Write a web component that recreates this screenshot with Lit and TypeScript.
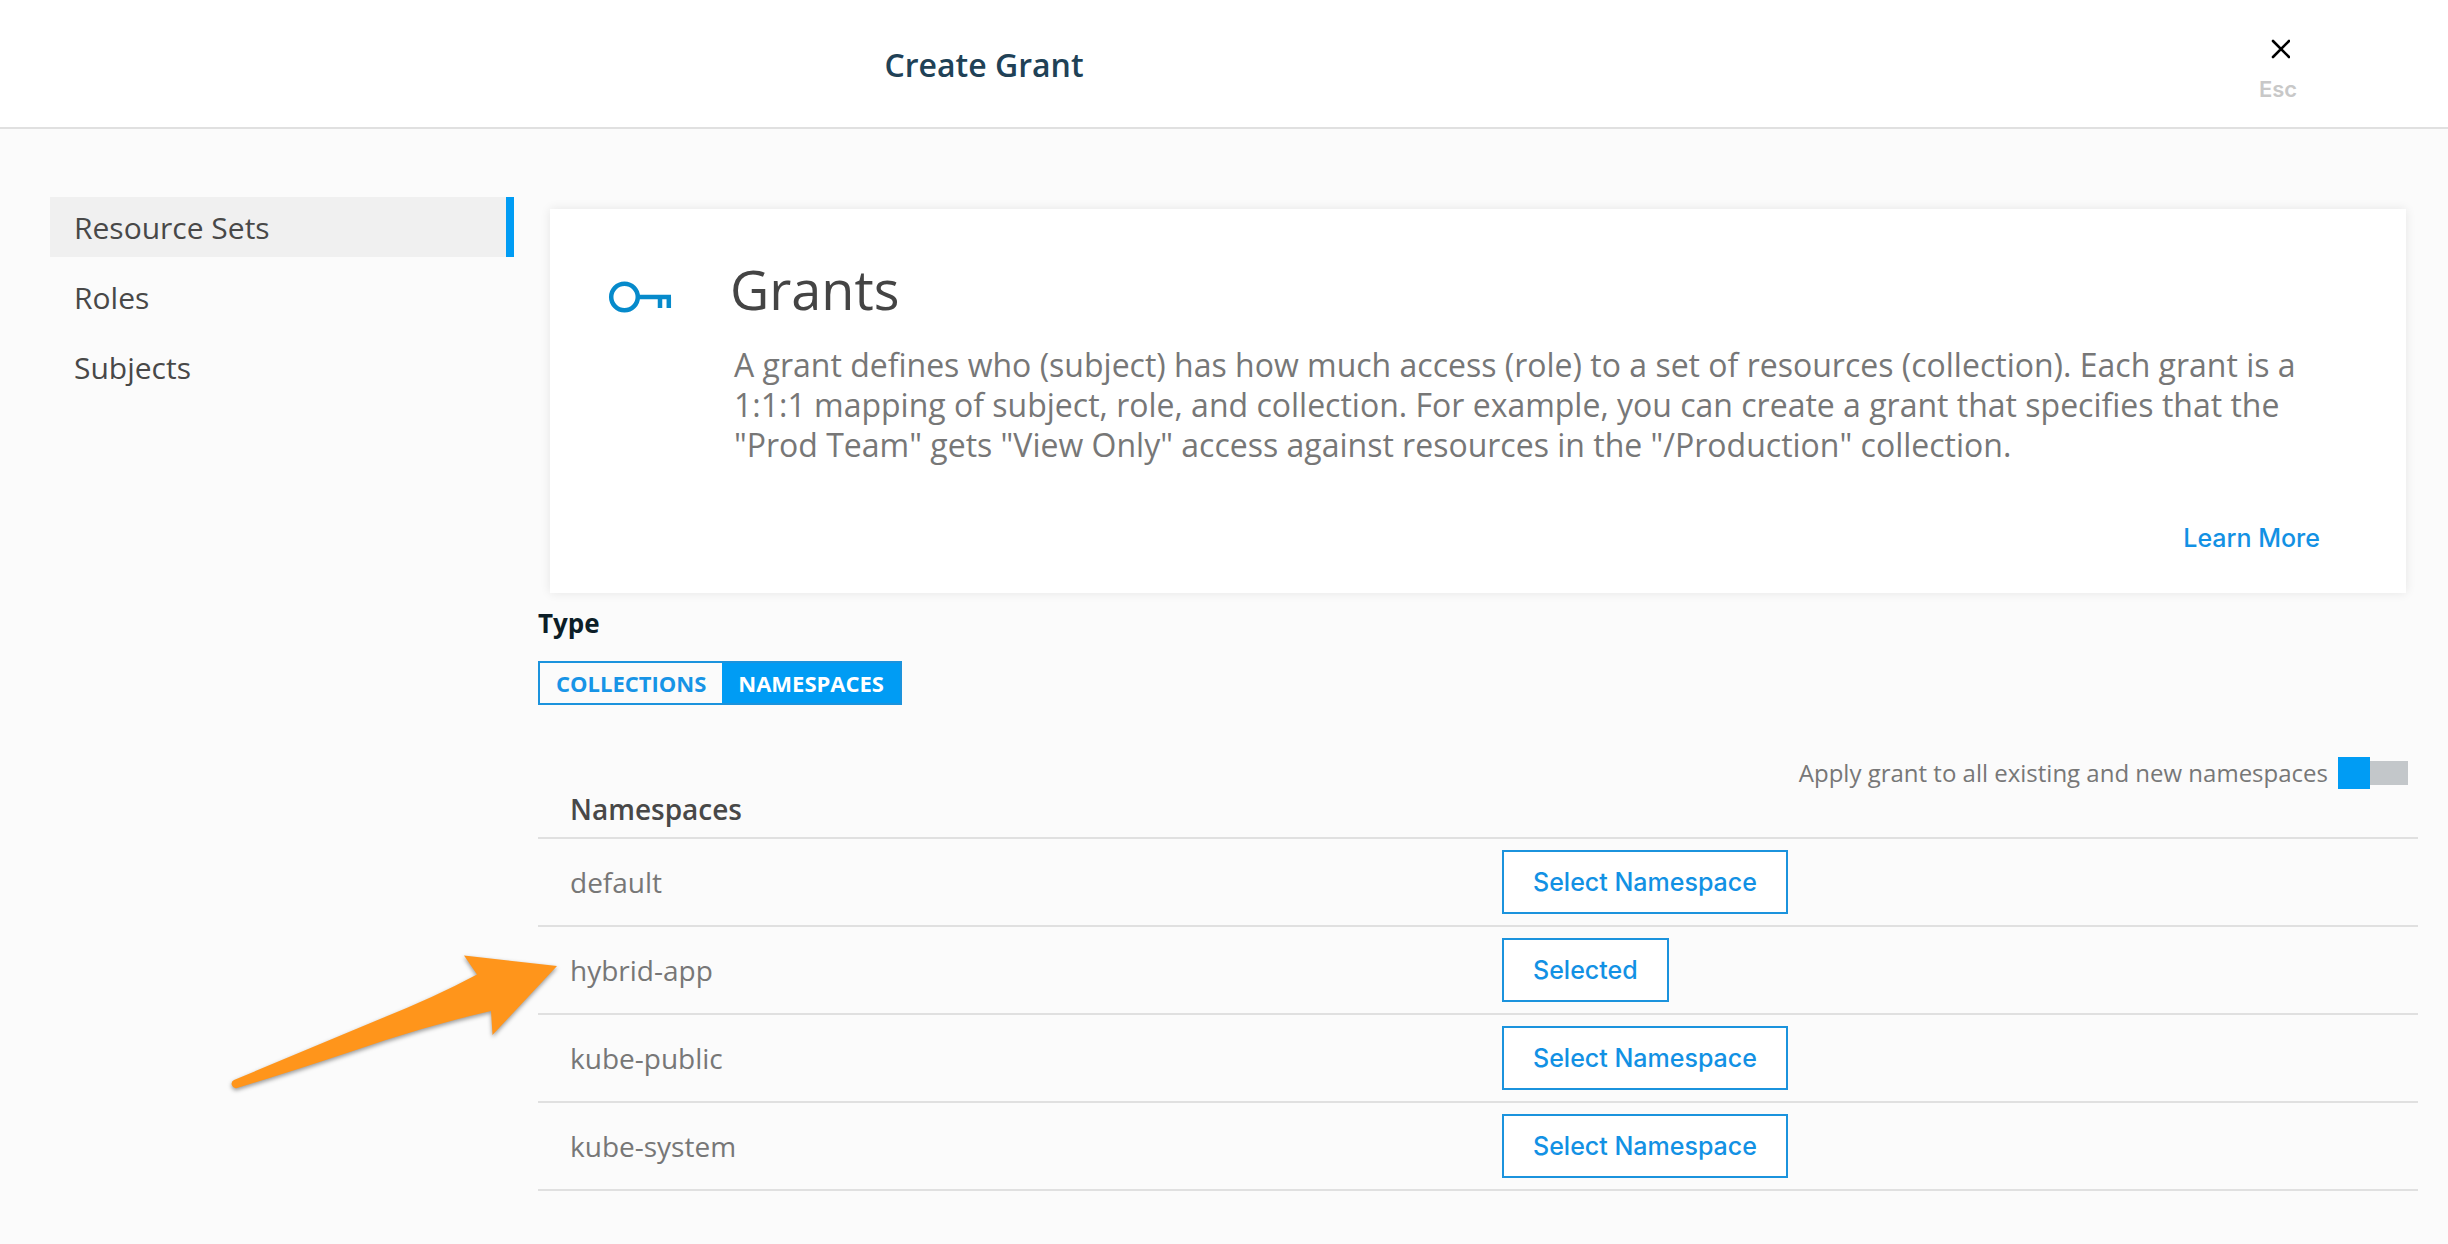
import { LitElement, html, css, nothing } from "lit";
import { customElement, state } from "lit/decorators.js";
import { classMap } from "lit/directives/class-map.js";

const STEPS = ["Resource Sets", "Roles", "Subjects"];
const TYPES = ["Collections", "Namespaces"];
const NAMESPACES = ["default", "hybrid-app", "kube-public", "kube-system"];
const POINTED_AT = "hybrid-app";

@customElement("app-root")
export class AppRoot extends LitElement {
  @state() private step = "Resource Sets";
  @state() private type = "Namespaces";
  @state() private selected = "hybrid-app";
  @state() private applyToAll = false;

  static styles = css`
    :host {
      --blue: #009cf4;
      --edge: #1b93dd;
      --line: #e0e0e0;
      display: block;
      min-height: 100vh;
      background: #fbfbfb;
      color: #777;
      font-family: "Open Sans", "Noto Sans", sans-serif;
    }
    * {
      box-sizing: border-box;
    }
    h1,
    h2,
    h3,
    p,
    ul {
      margin: 0;
      padding: 0;
    }
    button {
      margin: 0;
      padding: 0;
      border: 0;
      background: none;
      font: inherit;
      cursor: pointer;
    }
    .header {
      display: grid;
      grid-template-columns: minmax(0, 1fr) 60px;
      column-gap: 280px;
      align-items: start;
      min-height: 129px;
      padding: 38px 140px 24px 0;
      background: #fff;
      border-bottom: 2px solid var(--line);
    }
    .title {
      padding-top: 5px;
      color: #204156;
      font-size: 32px;
      font-weight: 600;
      line-height: 44px;
      text-align: center;
    }
    .close {
      display: flex;
      flex-direction: column;
      align-items: center;
      gap: 15px;
      color: #c8c8c8;
      font-family: Inter, "Liberation Sans", sans-serif;
      font-size: 22px;
      font-weight: 600;
      line-height: 28px;
    }
    .cross {
      width: 24px;
      height: 22px;
      stroke: #000;
      stroke-width: 2.6;
      stroke-linecap: round;
    }
    .body {
      display: grid;
      grid-template-columns: 464px minmax(0, 1fr);
      column-gap: 24px;
      padding: 68px 30px 40px 50px;
    }
    .steps {
      display: flex;
      flex-direction: column;
      gap: 10px;
      list-style: none;
    }
    .step {
      display: block;
      width: 100%;
      padding: 11px 24px 9px;
      color: #484848;
      font-size: 30px;
      line-height: 40px;
      text-align: left;
    }
    .step.current {
      background: #f0f0f0;
      border-right: 8px solid var(--blue);
    }
    .card {
      display: grid;
      grid-template-columns: 64px minmax(0, 1fr);
      column-gap: 58px;
      margin: 12px;
      padding: 42px 86px 39px 58px;
      background: #fff;
      box-shadow: 0 0 10px rgba(0, 0, 0, 0.09);
    }
    .key {
      width: 64px;
      height: 32px;
      margin-top: 30px;
      fill: none;
      stroke: #068acb;
      stroke-width: 4.5;
    }
    .card-title {
      color: #444;
      font-size: 54px;
      font-weight: 400;
      line-height: 76px;
    }
    .card-text {
      padding: 18px 0 0 4px;
      font-size: 32px;
      line-height: 40px;
    }
    .more {
      display: flex;
      justify-content: flex-end;
      padding-top: 57px;
    }
    .link {
      color: #1291e4;
      font-family: Inter, "Liberation Sans", sans-serif;
      font-size: 25px;
      font-weight: 500;
      line-height: 32px;
      text-decoration: none;
    }
    .label {
      color: #0c1e27;
      font-size: 26px;
      font-weight: 700;
      line-height: 36px;
    }
    .segments {
      display: inline-flex;
      margin-top: 20px;
      border: 2px solid var(--edge);
    }
    .segment {
      padding: 0 16px;
      color: #1794e6;
      font-size: 22px;
      font-weight: 700;
      line-height: 40px;
      text-transform: uppercase;
    }
    .segment.on {
      background: var(--blue);
      color: #fff;
    }
    .apply {
      display: flex;
      justify-content: flex-end;
      align-items: center;
      gap: 10px;
      margin-top: 52px;
      padding-right: 10px;
      font-size: 24px;
      line-height: 32px;
    }
    .switch {
      display: flex;
      align-items: center;
      width: 70px;
      height: 32px;
      margin: 0;
      appearance: none;
      background: linear-gradient(#c3c7ca, #c3c7ca) center / 100% 24px no-repeat;
      cursor: pointer;
    }
    .switch::before {
      content: "";
      width: 32px;
      height: 32px;
      background: var(--blue);
    }
    .switch:checked {
      justify-content: flex-end;
    }
    .table {
      width: 100%;
      border-collapse: separate;
      border-spacing: 0;
      table-layout: fixed;
    }
    .head {
      padding: 0 32px 8px;
      border-bottom: 2px solid var(--line);
      color: #484848;
      font-size: 28px;
      font-weight: 600;
      line-height: 40px;
      text-align: left;
    }
    .name,
    .action {
      padding: 11px 32px;
      border-bottom: 2px solid var(--line);
      font-size: 28px;
      line-height: 40px;
    }
    .name {
      position: relative;
    }
    .action {
      padding: 11px 24px;
    }
    .pick {
      display: block;
      padding: 14px 29px;
      border: 2px solid var(--edge);
      background: #fff;
      color: #1291e4;
      font-family: Inter, "Liberation Sans", sans-serif;
      font-size: 25px;
      font-weight: 500;
      line-height: 32px;
    }
    .arrow {
      position: absolute;
      top: 28px;
      left: -308px;
      width: 330px;
      height: 140px;
      fill: #ff951b;
      filter: drop-shadow(0 2px 2px rgba(0, 0, 0, 0.4));
      pointer-events: none;
    }
  `;

  private toggle(name: string) {
    this.selected = this.selected === name ? "" : name;
  }

  private arrow() {
    return html`<svg class="arrow" viewBox="0 0 330 140" aria-hidden="true">
      <path
        d="M327 11 L234 0.5 L247 19.5 Q205 42 150 64 L4 125 A4.3 4.3 0 0 0 7 133 Q60 117 120 97 Q195 71 261 56 L262.500 80 Z"
      />
    </svg>`;
  }

  private row(name: string) {
    return html`<tr>
      <td class="name">${name}${name === POINTED_AT ? this.arrow() : nothing}</td>
      <td class="action">
        <button class="pick" type="button" @click=${() => this.toggle(name)}>
          ${this.selected === name ? "Selected" : "Select Namespace"}
        </button>
      </td>
    </tr>`;
  }

  render() {
    return html`
      <header class="header">
        <h1 class="title">Create Grant</h1>
        <button class="close" type="button">
          <svg class="cross" viewBox="0 0 24 22" aria-hidden="true">
            <path d="M7 3 L23 19 M23 3 L7 19" />
          </svg>
          Esc
        </button>
      </header>
      <div class="body">
        <nav>
          <ul class="steps">
            ${STEPS.map(
              (s) => html`<li>
                <button
                  type="button"
                  class=${classMap({ step: true, current: s === this.step })}
                  @click=${() => (this.step = s)}
                >
                  ${s}
                </button>
              </li>`
            )}
          </ul>
        </nav>
        <main>
          <section class="card">
            <svg class="key" viewBox="0 0 64 32" aria-hidden="true">
              <circle cx="16.500" cy="16" r="13.300" />
              <path d="M30 16 H63 M52 16 V27 M60.800 16 V27" />
            </svg>
            <div>
              <h2 class="card-title">Grants</h2>
              <p class="card-text">
                A grant defines who (subject) has how much access (role) to a set of resources (collection). Each
                grant is a 1:1:1 mapping of subject, role, and collection. For example, you can create a grant that
                specifies that the "Prod Team" gets "View Only" access against resources in the "/Production"
                collection.
              </p>
              <div class="more"><a class="link" href="#learn-more">Learn More</a></div>
            </div>
          </section>
          <h3 class="label" id="type-label">Type</h3>
          <div class="segments" role="group" aria-labelledby="type-label">
            ${TYPES.map(
              (t) => html`<button
                type="button"
                class=${classMap({ segment: true, on: t === this.type })}
                aria-pressed=${t === this.type}
                @click=${() => (this.type = t)}
              >
                ${t}
              </button>`
            )}
          </div>
          <div class="apply">
            <label for="apply-all">Apply grant to all existing and new namespaces</label>
            <input
              class="switch"
              id="apply-all"
              type="checkbox"
              .checked=${this.applyToAll}
              @change=${(e: Event) => (this.applyToAll = (e.target as HTMLInputElement).checked)}
            />
          </div>
          <table class="table">
            <thead>
              <tr>
                <th class="head" scope="col">Namespaces</th>
                <td class="head"></td>
              </tr>
            </thead>
            <tbody>
              ${NAMESPACES.map((n) => this.row(n))}
            </tbody>
          </table>
        </main>
      </div>
    `;
  }
}
